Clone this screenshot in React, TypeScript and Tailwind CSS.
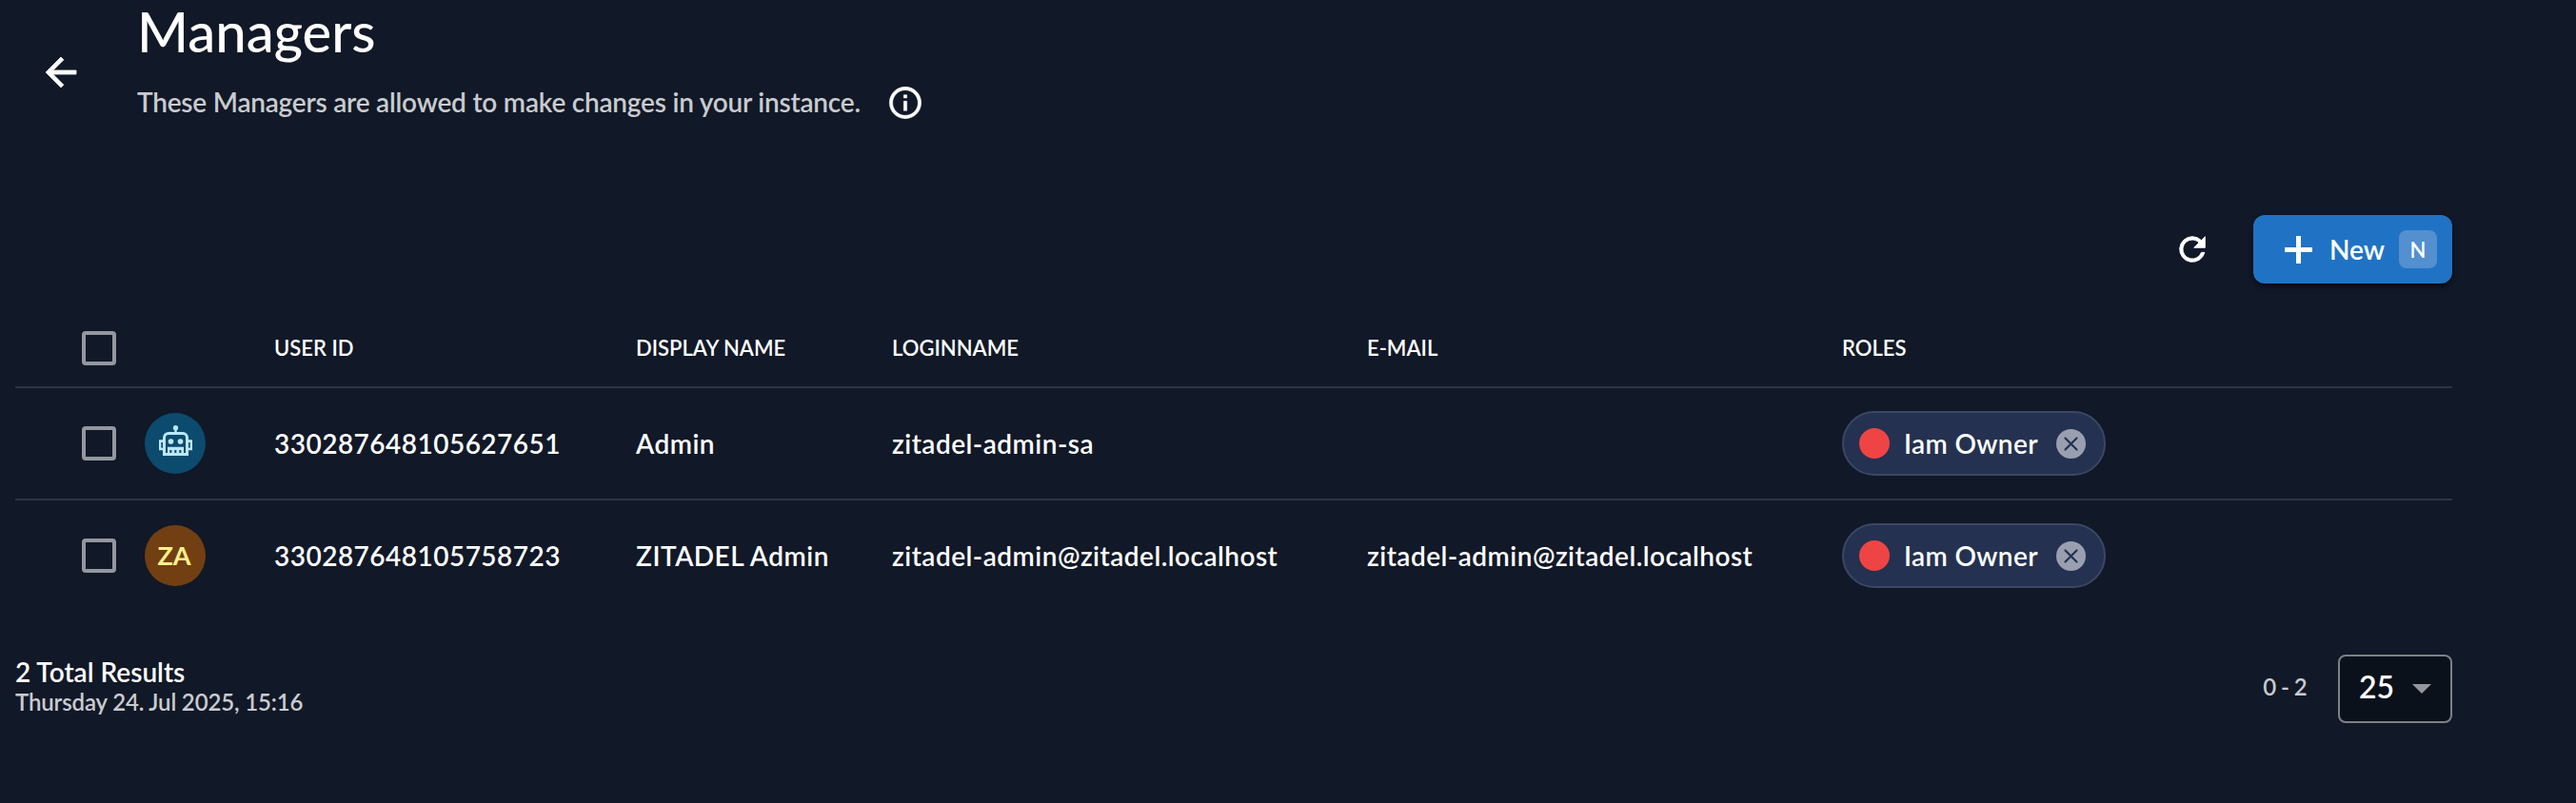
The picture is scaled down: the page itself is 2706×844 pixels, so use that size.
import React from "react";

const users = [
  { id: "330287648105627651", name: "Admin", login: "zitadel-admin-sa", email: "", machine: true },
  {
    id: "330287648105758723",
    name: "ZITADEL Admin",
    login: "zitadel-admin@zitadel.localhost",
    email: "zitadel-admin@zitadel.localhost",
    machine: false,
  },
];

const columns = "grid grid-cols-[136px_136px_380px_269px_499px_499px_1fr] items-center";

function Checkbox() {
  return <div className="ml-[70px] size-9 rounded-[4px] border-4 border-[#94979e]" />;
}

function Robot() {
  return (
    <svg className="mb-[6px] h-8 w-[35px]" viewBox="0 0 105 96" fill="#bae6fd">
      <circle cx="52.5" cy="8" r="8" />
      <path d="M49 8h7v16h-7z" />
      <path
        fillRule="evenodd"
        d="M30 21h45a18 18 0 0 1 18 18v57H12V39a18 18 0 0 1 18-18Zm0 9a9 9 0 0 0-9 9v48h6V68h51v19h6V39a9 9 0 0 0-9-9ZM34 78v9h6v-9zM49 78v9h6v-9zM64 78v9h6v-9z"
      />
      <circle cx="37.5" cy="51" r="8.5" />
      <circle cx="67.5" cy="51" r="8.5" />
      <path fillRule="evenodd" d="M0 46h13v33H0zM7 54v17h6V54zM92 46h13v33H92zM92 54v17h6V54z" />
    </svg>
  );
}

function RoleChip() {
  return (
    <div className="flex h-[68px] w-[277px] items-center rounded-full border-2 border-[#3a4863] bg-[#243150] pl-4">
      <div className="size-8 rounded-full bg-[#ef4444]" />
      <span className="ml-[15px] w-[143px] text-[28px] tracking-[0.35px]">Iam Owner</span>
      <svg className="ml-[17px] size-[31px]" viewBox="0 0 31 31">
        <circle cx="15.5" cy="15.5" r="15.5" fill="#9a9fb0" />
        <path d="m9.5 9.5 12 12m0-12-12 12" stroke="#243150" strokeWidth="2.2" strokeLinecap="round" />
      </svg>
    </div>
  );
}

export default function App() {
  return (
    <main
      className="h-[844px] w-[2706px] overflow-hidden bg-[#111827] pl-4 text-white"
      style={{ fontFamily: 'Lato, "Liberation Sans", sans-serif' }}
    >
      <div className="w-[2560px] font-semibold">
        <header className="flex h-[226px]">
          <svg className="mt-[52px] ml-6 size-12" viewBox="0 0 24 24" fill="#fff" stroke="#fff" strokeWidth="0.4">
            <path d="M20 11H7.83l5.59-5.59L12 4l-8 8 8 8 1.41-1.41L7.83 13H20v-2z" />
          </svg>
          <div className="ml-14">
            <h1 className="h-[80px] text-[58px] leading-[66px] font-medium">Managers</h1>
            <div className="flex items-center gap-[28px] text-[28px] text-[#c9cbcf]">
              <p className="w-[759px] leading-[54px] tracking-[-0.22px] whitespace-nowrap">
                These Managers are allowed to make changes in your instance.
              </p>
              <svg className="mt-0.5 size-10" viewBox="0 0 24 24" fill="#fff" stroke="#fff" strokeWidth="0.3">
                <path d="M11 7h2v2h-2zm0 4h2v6h-2zm1-9C6.48 2 2 6.48 2 12s4.48 10 10 10 10-4.48 10-10S17.52 2 12 2zm0 18c-4.41 0-8-3.590-8-8s3.590-8 8-8 8 3.590 8 8-3.590 8-8 8z" />
              </svg>
            </div>
          </div>
        </header>

        <div className="flex h-[72px] items-center justify-end">
          <svg className="mr-[44px] size-10" viewBox="0 0 24 24" fill="#fff" stroke="#fff" strokeWidth="0.5">
            <path d="M17.65 6.35A7.96 7.96 0 0 0 12 4a8 8 0 1 0 7.730 10h-2.080A6 6 0 1 1 12 6c1.660 0 3.140.69 4.220 1.780L13 11h7V4z" />
          </svg>
          <button className="flex h-[72px] w-[209px] items-center rounded-xl bg-[#2073c4] pl-[33px] text-[28px] shadow-md shadow-black/50">
            <svg className="size-[29px]" viewBox="0 0 29 29" fill="#fff">
              <path d="M12 0h5v12h12v5H17v12h-5V17H0v-5h12z" />
            </svg>
            <span className="ml-[18px] w-[58px] text-left">New</span>
            <span className="ml-[15px] flex size-10 items-center justify-center rounded-lg bg-[#548fd0] text-[22px]">N</span>
          </button>
        </div>

        <section>
          <div className={`${columns} h-[110px] border-b-2 border-[#2d3443] pt-[27px] text-[22px]`}>
            <Checkbox />
            <span />
            <span>USER ID</span>
            <span>DISPLAY NAME</span>
            <span>LOGINNAME</span>
            <span>E-MAIL</span>
            <span>ROLES</span>
          </div>
          {users.map((u) => (
            <div
              key={u.id}
              className={`${columns} h-[118px] border-b-2 border-[#2d3443] text-[28px] tracking-[0.48px] last:border-transparent`}
            >
              <Checkbox />
              {u.machine ? (
                <div className="flex size-16 items-center justify-center rounded-full bg-[#0c4a6e]">
                  <Robot />
                </div>
              ) : (
                <div className="flex size-16 items-center justify-center rounded-full bg-[#713f12] pr-0.5 text-[27px] font-bold tracking-normal text-[#fef08a]">
                  ZA
                </div>
              )}
              <span>{u.id}</span>
              <span>{u.name}</span>
              <span>{u.login}</span>
              <span>{u.email}</span>
              <RoleChip />
            </div>
          ))}
        </section>

        <footer className="mt-[44px] flex justify-between">
          <div className="pt-px">
            <div className="text-[28px] leading-[34px]">2 Total Results</div>
            <div className="pt-px text-[24px] leading-[28px] tracking-[-0.15px] text-[#c9cbcf]">
              Thursday 24. Jul 2025, 15:16
            </div>
          </div>
          <div className="flex items-center">
            <span className="mr-[33px] pb-1 text-[24px] tracking-[-0.6px] text-[#c9cbcf]">0 - 2</span>
            <div className="flex h-[72px] w-[120px] items-center rounded-lg border-2 border-[#7d8085] bg-[#0b111b] pl-5 text-[32px]">
              <span className="w-9 pb-1">25</span>
              <svg className="ml-[20px] h-[10px] w-5" viewBox="0 0 20 10" fill="#94969b">
                <path d="M0 0h20L10 10z" />
              </svg>
            </div>
          </div>
        </footer>
      </div>
    </main>
  );
}
